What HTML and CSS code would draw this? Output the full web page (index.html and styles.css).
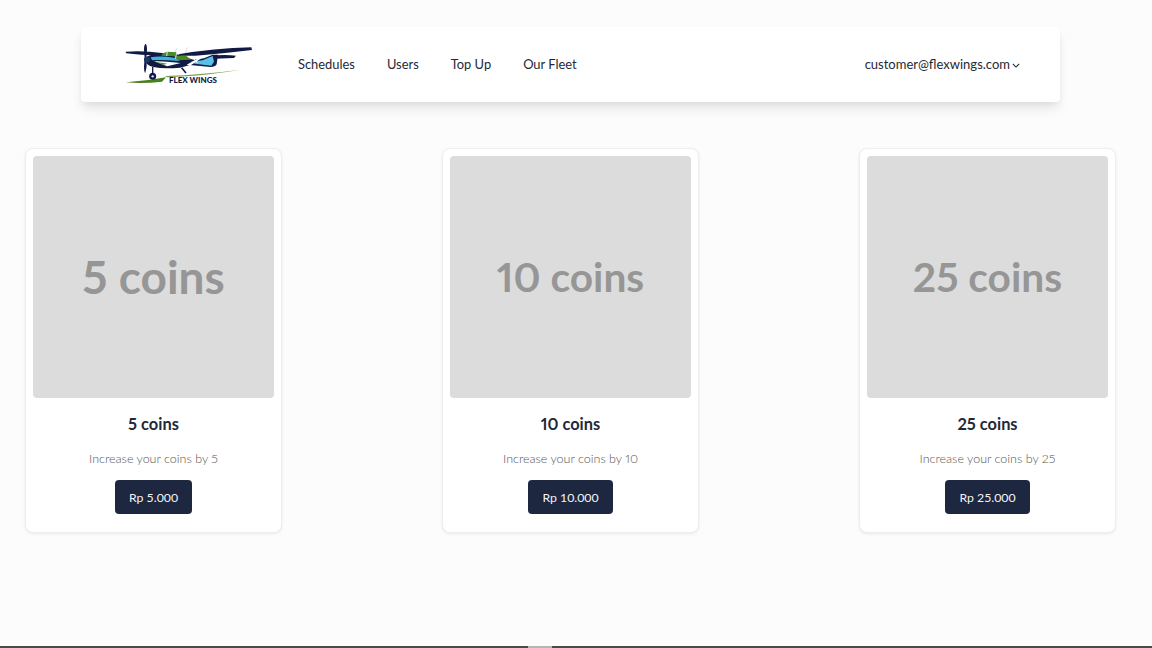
FILE: index.html
```html
<!DOCTYPE html>
<html lang="en">
<head>
<meta charset="utf-8">
<title>Flex Wings - Top Up</title>
<link rel="stylesheet" href="styles.css">
</head>
<body>
<div class="page">
  <header class="navbar">
    <div class="nav-left">
      <a class="logo" href="#" aria-label="Flex Wings">
        <svg class="logo-svg" viewBox="135 60 384 126" width="128" height="42">
          <path d="M138 178 Q200 174 258 163 L246 176 Q190 183 138 178Z" fill="#4a7f1f"/>
          <path d="M255 159 Q370 155 482 140 Q380 158 262 163Z" fill="#7f9a4a"/>
          <path d="M137 86 Q190 82 246 90 L246 97 Q190 98 138 91Z" fill="#101a44"/>
          <path d="M284 92 L290 76 M316 92 L322 73" stroke="#c8ccd0" stroke-width="2"/>
          <path d="M192 106 Q205 96 240 90 L290 94 L340 110 L372 106 L398 95 L414 95 L410 124 Q405 132 392 132 L330 126 L300 134 Q250 138 220 132 Q195 126 192 106Z" fill="#101a44"/>
          <path d="M243 98 Q250 88 262 86 L290 88 L286 100Z" fill="#4a8a26"/>
          <path d="M283 98 L318 98 L334 110 L286 112Z" fill="#4a8a26"/>
          <path d="M262 86 L260 99 M290 88 L286 110" stroke="#dfe6ee" stroke-width="3"/>
          <path d="M212 103 Q240 98 282 104 L300 114 L262 112 Q235 110 216 112Z" fill="#3fb3df"/>
          <path d="M222 114 L262 116 L302 120 L262 130 Q240 122 222 114Z" fill="#fff"/>
          <path d="M225 116 L262 122 L250 125Z" fill="#4a8a26"/>
          <path d="M332 116 L368 112 L398 99 L402 116 L394 128 L345 122Z" fill="#57c1e8"/>
          <path d="M295 94 Q400 76 514 73 L516 81 Q440 90 372 96 L345 98 L300 98Z" fill="#101a44"/>
          <path d="M320 125 L368 98 L376 98 L330 128Z" fill="#fff"/>
          <path d="M336 100 L352 120" stroke="#fff" stroke-width="3"/>
          <path d="M405 97 Q440 94 468 98 L462 105 L405 107Z" fill="#101a44"/>
          <path d="M196 63 Q201 63 201 80 L199 105 L200 130 L196 150 Q192 148 192 130 L194 105 L192 80 Q192 66 196 63Z" fill="#101a44"/>
          <circle cx="201" cy="110" r="9" fill="#1d3766"/>
          <path d="M218 132 L218 150" stroke="#101a44" stroke-width="4"/>
          <circle cx="218" cy="160" r="10.500" fill="#101a44"/>
          <circle cx="218" cy="160" r="3.500" fill="#dfe6ee"/>
          <path d="M305 134 L318 150" stroke="#101a44" stroke-width="5"/>
        </svg>
        <span class="logo-text">FLEX WINGS</span>
      </a>
      <nav class="nav-links">
        <a href="#">Schedules</a>
        <a href="#">Users</a>
        <a href="#">Top Up</a>
        <a href="#">Our Fleet</a>
      </nav>
    </div>
    <div class="account">
      <span>customer@flexwings.com</span>
      <svg class="chevron" viewBox="0 0 10 6" width="8" height="5"><path d="M1 1 L5 5 L9 1" fill="none" stroke="#1f2937" stroke-width="1.300"/></svg>
    </div>
  </header>

  <main class="cards">
    <article class="card">
      <div class="thumb">5 coins</div>
      <h2 class="card-title">5 coins</h2>
      <p class="card-text">Increase your coins by 5</p>
      <button class="price">Rp 5.000</button>
    </article>
    <article class="card">
      <div class="thumb thumb-long">10 coins</div>
      <h2 class="card-title">10 coins</h2>
      <p class="card-text">Increase your coins by 10</p>
      <button class="price">Rp 10.000</button>
    </article>
    <article class="card">
      <div class="thumb thumb-long">25 coins</div>
      <h2 class="card-title">25 coins</h2>
      <p class="card-text">Increase your coins by 25</p>
      <button class="price">Rp 25.000</button>
    </article>
  </main>

  <div class="bottom-edge">
    <span class="edge-left"></span>
    <span class="edge-light"></span>
    <span class="edge-right"></span>
  </div>
</div>
</body>
</html>
```
FILE: styles.css
```css
* { box-sizing: border-box; }
html, body { margin: 0; height: 100%; }
body {
  background: #fcfcfc;
  color: #1f2937;
  font-family: "Lato", "Open Sans", sans-serif;
  font-variant-numeric: proportional-nums;
  overflow: hidden;
}
.page {
  height: 648px;
  display: flex;
  flex-direction: column;
  padding-top: 27px;
}
.navbar {
  width: 979px;
  height: 75px;
  margin-left: 81px;
  flex: none;
  background: #fff;
  border-radius: 4px;
  box-shadow: 0 8px 12px -2px rgba(0,0,0,.1), 0 2px 5px rgba(0,0,0,.04);
  display: flex;
  align-items: center;
  justify-content: space-between;
  padding: 0 40px 0 44px;
}
.nav-left { display: flex; align-items: center; margin-top: -1px; }
.logo {
  display: block;
  position: relative;
  width: 128px;
  height: 42px;
  text-decoration: none;
  margin-right: 45px;
}
.logo-svg { display: block; }
.logo-text {
  position: absolute;
  left: 44px;
  top: 32px;
  font-size: 8px;
  line-height: 10px;
  font-weight: 900;
  color: #101a44;
  white-space: nowrap;
}
.nav-links { display: flex; gap: 32px; }
.nav-links a {
  font-size: 12.900px;
  line-height: 20px;
  color: #1f2937;
  text-decoration: none;
}
.account {
  display: flex;
  align-items: center;
  gap: 2px;
  font-size: 13px;
  line-height: 20px;
  color: #1f2937;
  margin-top: -1px;
}
.chevron { margin-top: 3px; }
.cards {
  flex: 1;
  display: flex;
  justify-content: space-between;
  align-items: flex-start;
  padding: 46px 36px 0 25px;
}
.card {
  width: 257px;
  height: 385px;
  background: #fff;
  border: 1px solid #eeeeee;
  border-radius: 8px;
  box-shadow: 0 1px 3px rgba(0,0,0,.08);
  padding: 7px 7px 6px;
  display: flex;
  flex-direction: column;
  align-items: center;
}
.thumb {
  width: 241px;
  height: 242px;
  flex: none;
  background: #dcdcdc;
  border-radius: 4px;
  color: #969696;
  font-size: 46px;
  font-weight: 700;
  display: flex;
  align-items: center;
  justify-content: center;
  padding-bottom: 2px;
}
.thumb-long { font-size: 40.700px; }
.card-title {
  margin: 15px 0 0;
  font-size: 16.400px;
  line-height: 22px;
  font-weight: 700;
  color: #1f2937;
}
.card-text {
  margin: 14px 0 0;
  font-size: 12.500px;
  line-height: 20px;
  font-weight: 300;
  color: #555555;
}
.price {
  margin-top: 11px;
  height: 34px;
  padding: 0 14px;
  border: 0;
  border-radius: 4px;
  background: #1d273f;
  color: #f3f4f6;
  font-family: inherit;
  font-size: 12.300px;
}
.bottom-edge {
  flex: none;
  height: 2px;
  display: flex;
}
.edge-left { width: 528px; background: #4a4a4a; }
.edge-right { flex: 1; background: #4a4a4a; }
.edge-light { width: 24px; background: #b5b5b5; }
```
